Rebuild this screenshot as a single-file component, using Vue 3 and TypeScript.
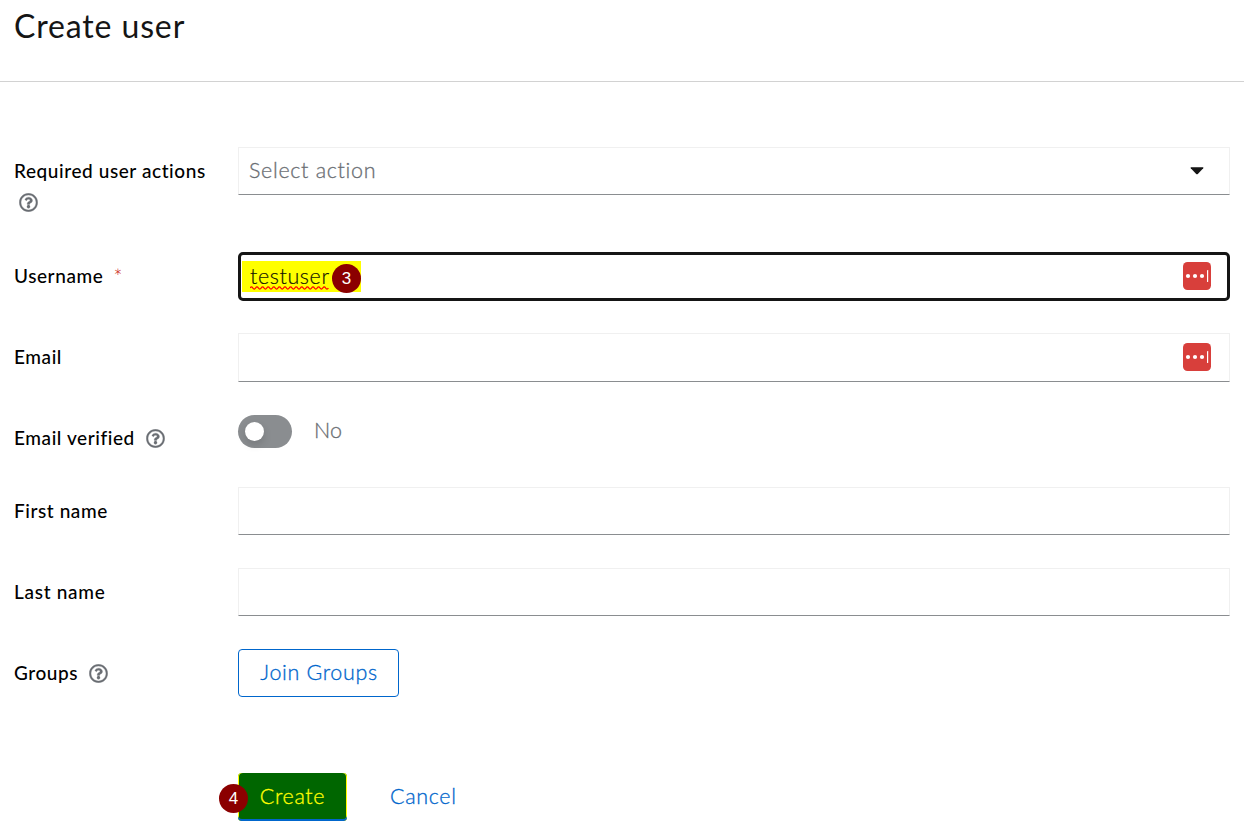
<script setup lang="ts">
import { ref } from 'vue'

interface Field {
  id: string
  label: string
  kind: 'select' | 'text' | 'switch' | 'groups'
  help?: boolean
  required?: boolean
  manager?: boolean
}

const fields: Field[] = [
  { id: 'actions', label: 'Required user actions', kind: 'select', help: true },
  { id: 'username', label: 'Username', kind: 'text', required: true, manager: true },
  { id: 'email', label: 'Email', kind: 'text', manager: true },
  { id: 'verified', label: 'Email verified', kind: 'switch', help: true },
  { id: 'first', label: 'First name', kind: 'text' },
  { id: 'last', label: 'Last name', kind: 'text' },
  { id: 'groups', label: 'Groups', kind: 'groups', help: true },
]
const username = ref('testuser')
</script>

<template>
  <main class="page">
    <header class="header"><h1>Create user</h1></header>
    <form class="form" @submit.prevent>
      <div v-for="f in fields" :key="f.id" class="row" :class="'row-' + f.id">
        <div class="label">
          <span>{{ f.label }}</span>
          <span v-if="f.required" class="required">*</span>
          <svg v-if="f.help" class="help" viewBox="0 0 512 512">
            <path fill="currentColor" stroke="currentColor" stroke-width="8" d="M256 8C119 8 8 119.100 8 256c0 137 111 248 248 248s248-111 248-248C504 119.100 393 8 256 8zm0 448c-110.500 0-200-89.400-200-200 0-110.500 89.500-200 200-200 110.500 0 200 89.500 200 200 0 110.500-89.400 200-200 200zm107.200-255.200c0 67.100-72.400 68.100-72.400 92.900V300c0 6.600-5.400 12-12 12h-45.600c-6.600 0-12-5.400-12-12v-8.700c0-35.700 27.100-50 47.600-61.500 17.600-9.800 28.300-16.500 28.300-29.600 0-17.200-22-28.700-39.800-28.700-23.200 0-33.900 11-49 30-4.100 5.100-11.500 6.100-16.700 2.100l-27.800-21.100c-5.100-3.900-6.300-11.100-2.600-16.400C184.800 131.500 214.900 112 261.800 112c49.100 0 101.500 38.300 101.500 88.800zM298 368c0 23.200-18.800 42-42 42s-42-18.800-42-42 18.800-42 42-42 42 18.800 42 42z" />
          </svg>
        </div>

        <div v-if="f.kind === 'select'" class="control select">
          <span class="placeholder">Select action</span>
          <svg class="caret" viewBox="0 0 14 8"><path d="M1.200.3H12.800Q13.900.4 13.200 1.300L7.800 6.900Q7 7.600 6.200 6.900L.8 1.300Q.1.400 1.200.3Z" /></svg>
        </div>

        <div v-else-if="f.kind === 'text'" class="control" :class="{ focused: f.id === 'username' }">
          <span v-if="f.id === 'username'" class="mark">
            <span class="value">{{ username }}
              <svg class="squiggle" viewBox="0 0 79 4"><path d="M0 2 q1.400 -2.200 2.800 0 t2.800 0 t2.800 0 t2.800 0 t2.800 0 t2.800 0 t2.800 0 t2.800 0 t2.800 0 t2.800 0 t2.800 0 t2.800 0 t2.800 0 t2.800 0 t2.800 0 t2.800 0 t2.800 0 t2.800 0 t2.800 0 t2.800 0 t2.800 0 t2.800 0 t2.800 0 t2.800 0 t2.800 0 t2.800 0 t2.800 0 t2.800 0" /></svg>
            </span>
            <span class="step step-user">3</span>
          </span>
          <svg v-if="f.manager" class="manager" viewBox="0 0 28 28">
            <rect width="28" height="28" rx="4.500" fill="#d83f3b" />
            <g fill="#fff"><circle cx="5" cy="14" r="2.100" /><circle cx="12" cy="14" r="2.100" /><circle cx="19" cy="14" r="2.100" /><rect x="24" y="8" width="1.200" height="12" rx=".6" /></g>
          </svg>
        </div>

        <div v-else-if="f.kind === 'switch'" class="switch-line">
          <span class="switch"><span class="knob"></span></span>
          <span class="state">No</span>
        </div>

        <button v-else class="join" type="button">Join Groups</button>
      </div>

      <div class="actions">
        <button class="create" type="submit">Create<span class="step step-create">4</span></button>
        <button class="cancel" type="button">Cancel</button>
      </div>
    </form>
  </main>
</template>

<style>
body { background: #fff; }
</style>

<style scoped>
* { box-sizing: border-box; }
.page { width: 1244px; height: 839px; overflow: hidden; font-family: Lato, "Liberation Sans", sans-serif; color: #151515; }
.header { height: 82px; padding: 5px 14px; border-bottom: 1px solid #d2d2d2; }
h1 { margin: 0; font-size: 32px; line-height: 42px; font-weight: 400; letter-spacing: .87px; }
.form { padding: 65px 14px 0; }
.row { display: grid; grid-template-columns: 224px 992px; align-items: start; height: 81px; }
.row-actions { height: 105px; }
.row-verified { height: 73px; }
.row-groups { height: 124px; }
.label { padding-top: 8px; font-size: 19px; line-height: 32px; font-weight: 500; letter-spacing: .58px; color: #000; white-space: nowrap; display: flex; flex-wrap: wrap; align-items: center; }
.help { width: 19px; height: 19px; margin-left: 11px; color: #6a6e73; }
.row-actions .help { margin: 6px 0 0 5px; }
.row-actions .label { padding-right: 20px; }
.row-last .label { letter-spacing: .7px; }
.required { color: #c9190b; font-size: 21px; font-weight: 300; margin-left: 10px; padding-top: 2px; line-height: 30px; }
.control { height: 48px; border: 1px solid #f0f0f0; border-bottom-color: #8a8d90; display: flex; align-items: center; padding: 0 18px 0 10px; font-size: 21.500px; font-weight: 300; }
.row-email .control { height: 49px; padding-bottom: 1px; }
.placeholder { letter-spacing: .68px; padding-bottom: 2px; -webkit-text-stroke: .3px currentColor; }
.select { color: #6a6e73; }
.caret { width: 14px; height: 8px; margin-left: auto; margin-right: 7px; fill: #151515; }
.manager { width: 28px; height: 28px; margin-left: auto; flex: none; }
.focused { height: 49px; border: 3px solid #151515; border-radius: 5px; padding: 0 16px 0 1px; }
.focused .manager { margin-bottom: 2px; }
.mark { display: flex; align-items: center; width: 119px; height: 31px; background: #ff0; padding-left: 8px; color: #151500; }
.value { position: relative; width: 82px; line-height: 31px; letter-spacing: .6px; -webkit-text-stroke: .2px currentColor; }
.squiggle { position: absolute; left: 0; top: 25px; width: 79px; height: 4px; fill: none; stroke: #f00; stroke-width: 1.300; }
.step { display: flex; flex: none; align-items: center; justify-content: center; width: 29px; height: 29px; border-radius: 50%; background: #8b0000; color: #fff; font: 400 17px/29px "Liberation Sans", sans-serif; letter-spacing: 0; -webkit-text-stroke: 0; }
.step-user { position: relative; top: 2px; }
.switch-line { display: flex; align-items: center; height: 34px; gap: 22px; font-size: 21.500px; font-weight: 300; color: #6a6e73; }
.state { padding-bottom: 2px; -webkit-text-stroke: .3px currentColor; }
.switch { width: 54px; height: 33px; border-radius: 17px; background: #8a8d90; padding: 7px; }
.knob { display: block; width: 19px; height: 19px; border-radius: 50%; background: #fff; box-shadow: 0 4px 8px rgba(3, 3, 3, .14); }
button { font: 300 21.500px/32px Lato, "Liberation Sans", sans-serif; margin: 0; height: 48px; padding: 0 0 2px; white-space: nowrap; letter-spacing: .65px; -webkit-text-stroke: .3px currentColor; }
.join { width: 161px; border: 1px solid #06c; border-radius: 4px; background: #fff; color: #06c; padding-left: 1px; }
.actions { display: flex; padding-left: 224px; }
.create { position: relative; width: 109px; border: 0; border-radius: 4px; background: #060; color: #ff0; box-shadow: inset 0 -2px #06c, inset 1px 0 #ff0, inset -1px 0 #ff0; }
.step-create { position: absolute; left: -19px; top: 11px; }
.cancel { margin-left: 43px; border: 0; background: none; color: #06c; }
</style>
